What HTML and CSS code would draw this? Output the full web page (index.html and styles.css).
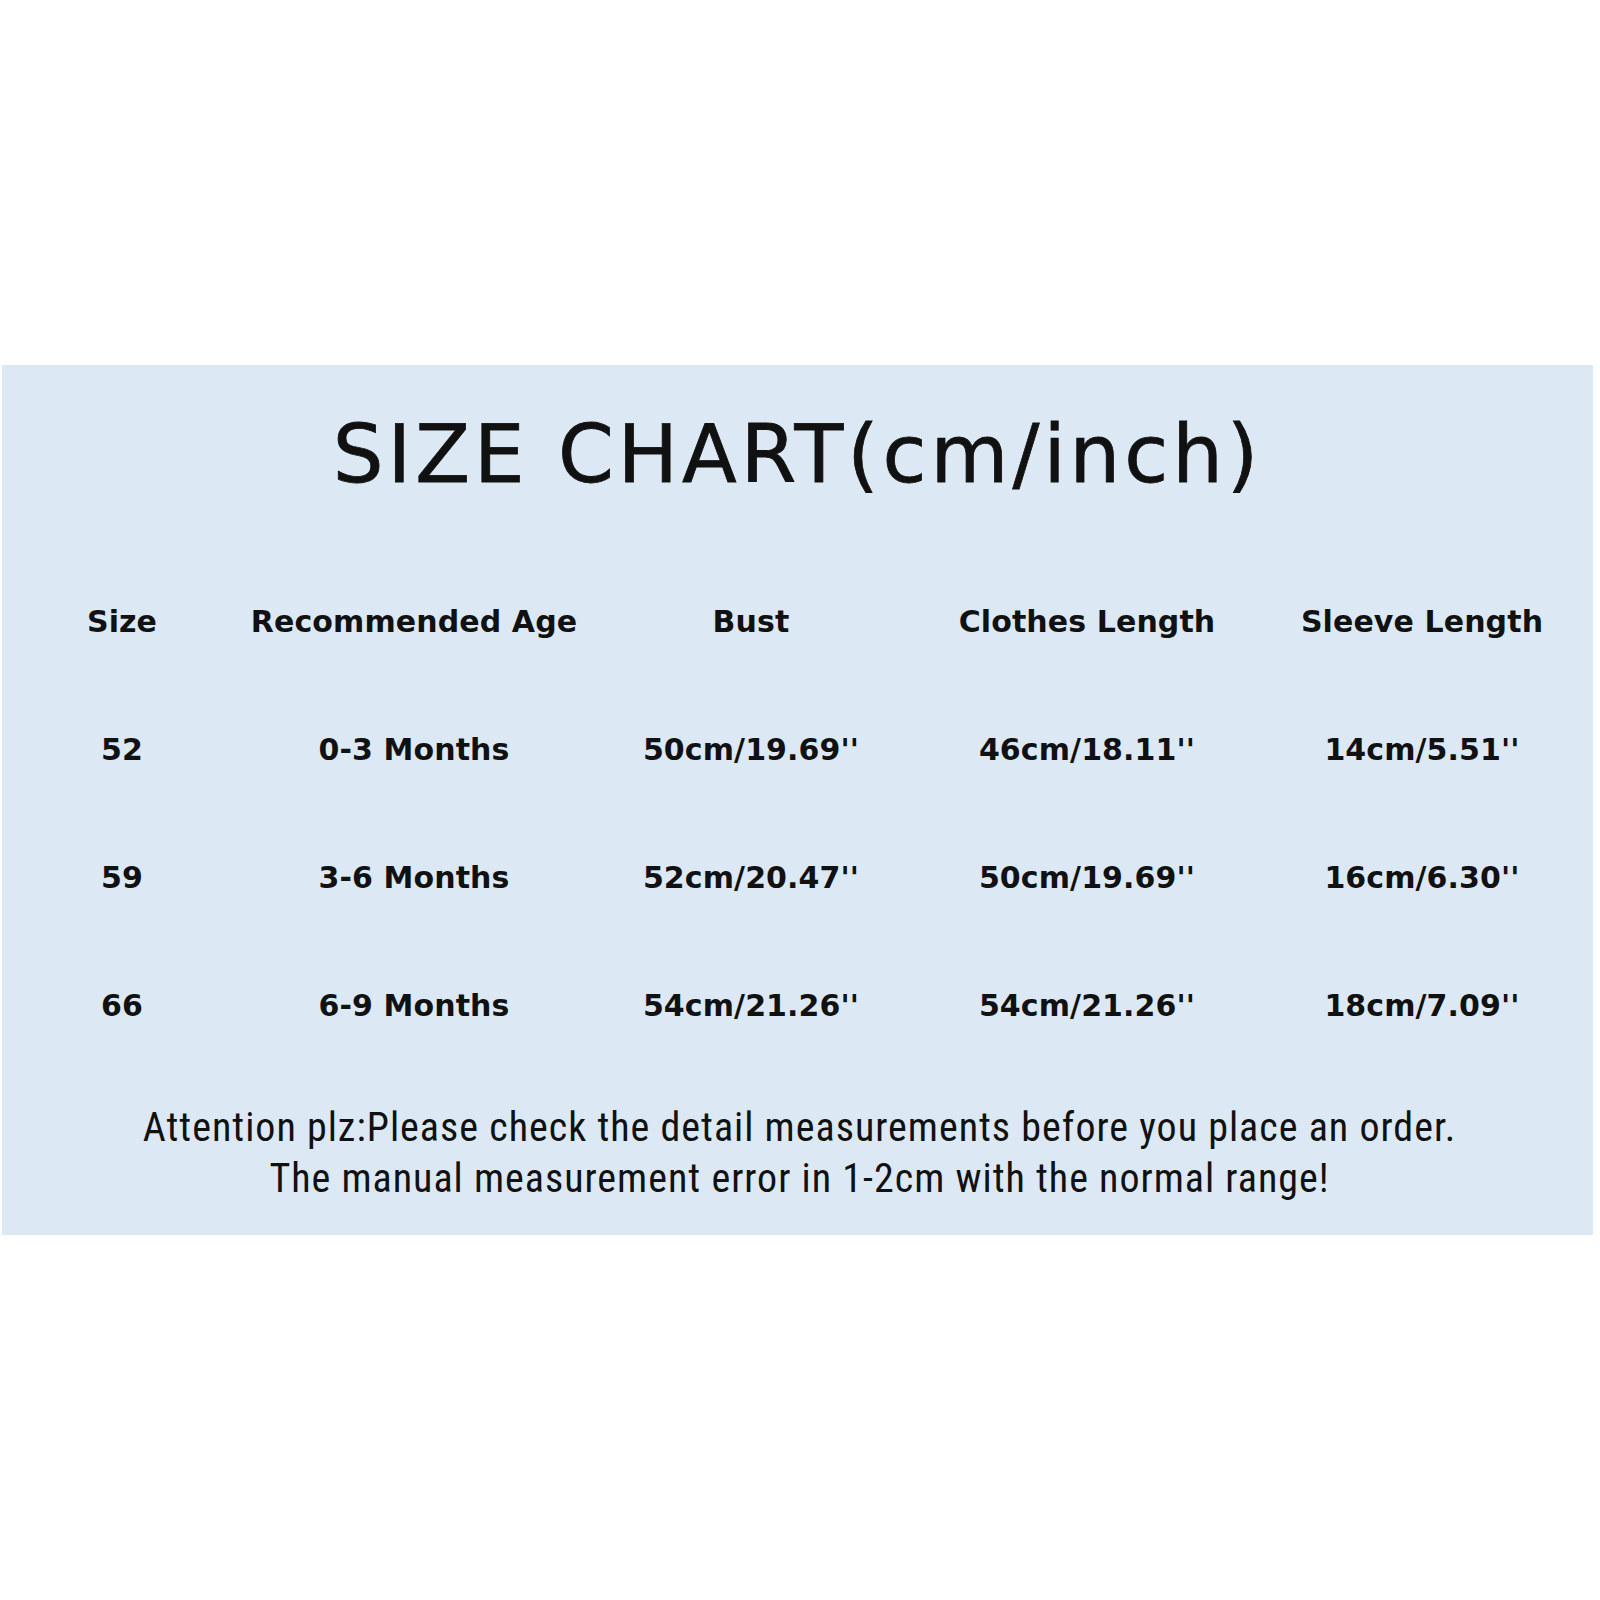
FILE: index.html
```html
<!DOCTYPE html>
<html lang="en">
<head>
<meta charset="utf-8">
<title>Size Chart</title>
<link rel="stylesheet" href="styles.css">
</head>
<body>
<div class="page">
  <section class="panel">
    <h1 class="title">SIZE CHART(cm/inch)</h1>
    <div class="chart">
      <div class="cell head c1">Size</div>
      <div class="cell head c2">Recommended Age</div>
      <div class="cell head c3">Bust</div>
      <div class="cell head c4">Clothes Length</div>
      <div class="cell head c5">Sleeve Length</div>

      <div class="cell">52</div>
      <div class="cell">0-3 Months</div>
      <div class="cell">50cm/19.69''</div>
      <div class="cell">46cm/18.11''</div>
      <div class="cell">14cm/5.51''</div>

      <div class="cell">59</div>
      <div class="cell">3-6 Months</div>
      <div class="cell">52cm/20.47''</div>
      <div class="cell">50cm/19.69''</div>
      <div class="cell">16cm/6.30''</div>

      <div class="cell">66</div>
      <div class="cell">6-9 Months</div>
      <div class="cell">54cm/21.26''</div>
      <div class="cell">54cm/21.26''</div>
      <div class="cell">18cm/7.09''</div>
    </div>
    <div class="note">
      <p>Attention plz:Please check the detail measurements before you place an order.</p>
      <p>The manual measurement error in 1-2cm with the normal range!</p>
    </div>
  </section>
</div>
</body>
</html>
```

FILE: styles.css
```css
html, body {
  margin: 0;
  padding: 0;
  background: #ffffff;
}

.page {
  width: 1600px;
  height: 1600px;
  padding-top: 365px;
  padding-left: 2px;
  box-sizing: border-box;
}

.panel {
  width: 1591px;
  height: 870px;
  background: #dce9f4;
  box-sizing: border-box;
  padding-top: 30px;
  color: #111111;
}

.title {
  margin: 0;
  height: 120px;
  line-height: 120px;
  text-align: center;
  font-family: "DejaVu Sans", sans-serif;
  font-weight: normal;
  font-size: 80px;
  letter-spacing: 4px;
  -webkit-text-stroke: 0.8px #111111;
}

.chart {
  margin-top: 42px;
  display: grid;
  grid-template-columns: 240px 344px 330px 342px 328px;
  grid-auto-rows: 128px;
  font-family: "DejaVu Sans", sans-serif;
  font-weight: bold;
  font-size: 30px;
  letter-spacing: 0.1px;
}

.cell {
  display: flex;
  align-items: center;
  justify-content: center;
  white-space: nowrap;
}

.note {
  margin-top: 33px;
  font-family: "Liberation Sans Narrow", "Roboto Condensed", "Open Sans", sans-serif;
  font-size: 40px;
  line-height: 51px;
  letter-spacing: 1px;
  text-align: center;
  padding-left: 4px;
}

.note p {
  margin: 0;
}
```
